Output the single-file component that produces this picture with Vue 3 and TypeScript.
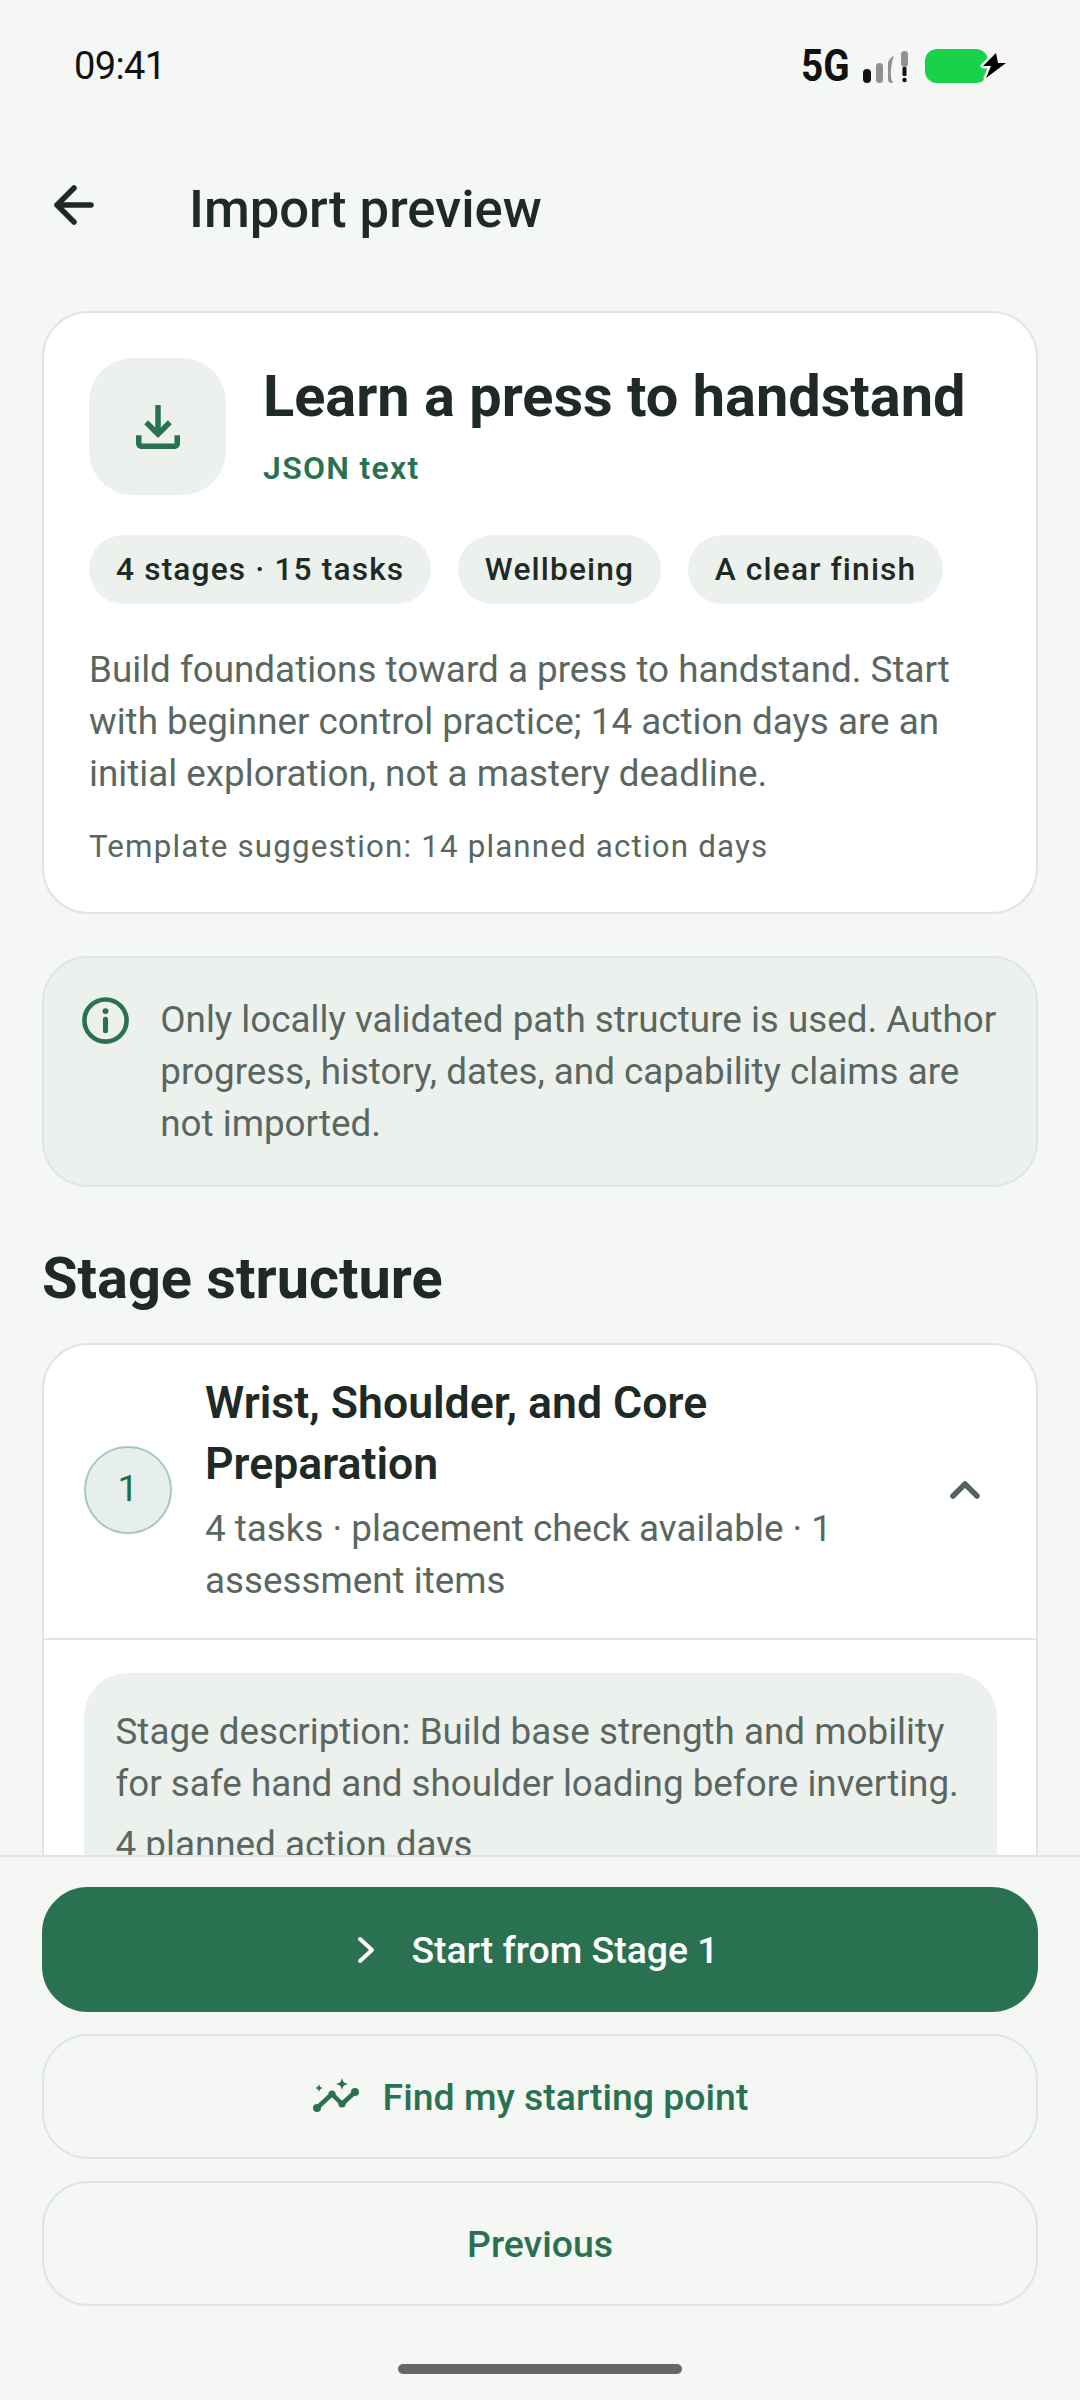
<script setup lang="ts">
const chips: string[] = ["4 stages · 15 tasks", "Wellbeing", "A clear finish"];
const boltPath = "M71 5 58 18h8l-5 12 20-15h-8l-2-10z";
</script>

<template>
  <div class="screen">
    <!-- status bar -->
    <div class="status">
      <span class="time">09:41</span>
      <div class="status-right">
        <span class="net">5G</span>
        <svg class="signal" width="46" height="34" viewBox="0 0 46 34">
          <rect x="0" y="20" width="8" height="14" rx="4" fill="#111" />
          <rect x="13" y="14" width="7" height="20" rx="3.5" fill="#8f918f" />
          <path d="M31 7c-3 1-6 4-6 8v15c0 2 1 4 3 4h2c-3-4-3-17 1-27z" fill="#8f918f" />
          <rect x="38" y="2" width="7" height="16" rx="3.5" fill="#8f918f" />
          <rect x="39.500" y="18" width="4" height="9" rx="1" fill="#111" />
          <circle cx="41.500" cy="31" r="2.200" fill="#111" />
        </svg>
        <svg class="battery" width="82" height="36" viewBox="0 0 82 36">
          <rect x="0" y="1" width="63" height="34" rx="12" fill="#1ad14c" />
          <path :d="boltPath" fill="#000" stroke="#f5f7f4" stroke-width="5" paint-order="stroke" stroke-linejoin="round" />
        </svg>
      </div>
    </div>

    <!-- app bar -->
    <header class="appbar">
      <svg class="back" width="66" height="66" viewBox="0 0 66 66" fill="none" stroke="#202a25" stroke-width="5.500" stroke-linecap="round" stroke-linejoin="round">
        <path d="M50 33H16M33 16 16 33l17 17" />
      </svg>
      <h1 class="page-title">Import preview</h1>
    </header>

    <main class="scroll">
      <section class="card summary">
        <div class="summary-head">
          <div class="summary-icon">
            <svg width="66" height="66" viewBox="0 0 24 24" fill="#2a7152">
              <path d="M18 15v3H6v-3H4v3c0 1.100.9 2 2 2h12c1.100 0 2-.9 2-2v-3h-2zM17 11l-1.410-1.410L13 12.170V4h-2v8.170L8.410 9.590 7 11l5 5 5-5z" />
            </svg>
          </div>
          <div class="summary-text">
            <h2 class="summary-title">Learn a press to handstand</h2>
            <div class="summary-source">JSON text</div>
          </div>
        </div>
        <div class="chips">
          <span v-for="chip in chips" :key="chip" class="chip">{{ chip }}</span>
        </div>
        <p class="body">Build foundations toward a press to handstand. Start with beginner control practice; 14 action days are an initial exploration, not a mastery deadline.</p>
        <p class="hint">Template suggestion: 14 planned action days</p>
      </section>

      <section class="notice">
        <svg class="notice-icon" width="55" height="55" viewBox="0 0 24 24" fill="none" stroke="#2a7152" stroke-width="2" stroke-linecap="round">
          <circle cx="12" cy="12" r="9.200" />
          <path d="M12 11.500v5" stroke-width="2.200" />
          <circle cx="12" cy="7.900" r="1.300" fill="#2a7152" stroke="none" />
        </svg>
        <p class="body">Only locally validated path structure is used. Author progress, history, dates, and capability claims are not imported.</p>
      </section>

      <h2 class="section-title">Stage structure</h2>

      <section class="card stage">
        <div class="stage-head">
          <div class="stage-badge">1</div>
          <div class="stage-text">
            <h3 class="stage-title">Wrist, Shoulder, and Core Preparation</h3>
            <p class="body stage-sub">4 tasks · placement check available · 1 assessment items</p>
          </div>
          <svg class="chevron" width="36" height="24" viewBox="0 0 36 24" fill="none" stroke="#56635c" stroke-width="5.500" stroke-linecap="round" stroke-linejoin="round">
            <path d="M6 18 18 6l12 12" />
          </svg>
        </div>
        <div class="stage-body">
          <div class="stage-desc">
            <p class="body">Stage description: Build base strength and mobility for safe hand and shoulder loading before inverting.</p>
            <p class="body planned">4 planned action days</p>
          </div>
        </div>
      </section>
    </main>

    <footer class="actions">
      <button class="btn primary">
        <svg width="24" height="30" viewBox="0 0 24 30" fill="none" stroke="#fff" stroke-width="4" stroke-linecap="round" stroke-linejoin="round">
          <path d="M6 4l12 11L6 26" />
        </svg>
        <span>Start from Stage 1</span>
      </button>
      <button class="btn secondary">
        <svg width="48" height="40" viewBox="0 0 48 40" fill="none">
          <path d="M5 31 20 17l10 10 13-12" stroke="#2a7152" stroke-width="4.500" stroke-linejoin="round" stroke-linecap="round" />
          <circle cx="5" cy="31" r="4" fill="#2a7152" />
          <circle cx="20" cy="17" r="3.600" fill="#2a7152" />
          <circle cx="30" cy="27" r="3.600" fill="#2a7152" />
          <circle cx="43" cy="15" r="4" fill="#2a7152" />
          <path d="M30 1c1 4 2 5 6 6-4 1-5 2-6 6-1-4-2-5-6-6 4-1 5-2 6-6zM7 7c.6 2.600 1.400 3.400 4 4-2.600.6-3.400 1.400-4 4-.6-2.600-1.400-3.400-4-4 2.600-.6 3.400-1.400 4-4z" fill="#2a7152" />
        </svg>
        <span>Find my starting point</span>
      </button>
      <button class="btn"><span>Previous</span></button>
      <div class="home-bar"></div>
    </footer>
  </div>
</template>

<style scoped>
.screen {
  width: 1080px;
  height: 2400px;
  display: flex;
  flex-direction: column;
  overflow: hidden;
  background: #f5f7f4;
  color: #202a25;
  font-family: Roboto, "Noto Sans", sans-serif;
}

.status {
  flex: none;
  height: 130px;
  padding: 44px 73px 0 74px;
  box-sizing: border-box;
  display: flex;
  justify-content: space-between;
  align-items: flex-start;
  color: #111;
}

.time {
  font-size: 38px;
  line-height: 44px;
  letter-spacing: -0.6px;
}

.status-right {
  display: flex;
  align-items: center;
  height: 48px;
  margin-top: -2px;
}

.net {
  font-size: 44px;
  font-weight: 700;
  line-height: 48px;
  width: 62px;
  transform: scaleX(0.88);
  transform-origin: left center;
}

.signal {
  margin-right: 16px;
}

.appbar {
  flex: none;
  height: 98px;
  margin-top: 46px;
  display: flex;
  align-items: flex-start;
  padding-left: 41px;
  box-sizing: border-box;
}

.back {
  margin-top: -4px;
}

.page-title {
  margin: 0 0 0 82px;
  font-size: 52.600px;
  font-weight: 500;
  line-height: 66px;
  color: #202a25;
}

.scroll {
  flex: 1;
  min-height: 0;
  overflow: hidden;
  padding: 37px 42px 0;
}

.card {
  background: #fff;
  border: 2.750px solid #dfe6e2;
  border-radius: 46px;
}

.summary {
  padding: 45px 45px 43px;
}

.summary-head {
  display: flex;
  gap: 37px;
}

.summary-icon {
  flex: none;
  width: 137px;
  height: 137px;
  border-radius: 44px;
  background: #edf1ee;
  display: flex;
  align-items: center;
  justify-content: center;
}

.summary-text {
  padding-top: 5px;
}

.summary-title {
  margin: 0;
  font-size: 57.700px;
  font-weight: 700;
  line-height: 66px;
  white-space: nowrap;
}

.summary-source {
  margin-top: 17px;
  font-size: 32px;
  font-weight: 600;
  line-height: 44px;
  letter-spacing: 1.300px;
  color: #2a7152;
}

.chips {
  display: flex;
  gap: 26.500px;
  margin-top: 40px;
}

.chip {
  height: 69px;
  padding: 0 27px;
  border-radius: 35px;
  background: #edf1ee;
  font-size: 31.700px;
  font-weight: 500;
  line-height: 69px;
  letter-spacing: 1.150px;
}

.body {
  margin: 0;
  font-size: 36.800px;
  line-height: 52.250px;
  color: #5a6760;
}

.summary .body {
  margin-top: 39.500px;
}

.hint {
  margin: 25px 0 0;
  font-size: 31.300px;
  line-height: 44px;
  letter-spacing: 1.170px;
  color: #5a6760;
}

.notice {
  margin-top: 42px;
  padding: 35.500px 33px 34.500px 33.750px;
  display: flex;
  gap: 27.500px;
  background: #edf1ee;
  border: 2.750px solid #dfe6e2;
  border-radius: 46px;
}

.notice-icon {
  flex: none;
  margin-top: -1px;
}

.section-title {
  margin: 58px 0 0;
  font-size: 57.700px;
  font-weight: 700;
  line-height: 66px;
}

.stage {
  margin-top: 32px;
}

.stage-head {
  display: flex;
  align-items: center;
  padding: 28px 38px 30px 40px;
  border-bottom: 2.750px solid #dfe6e2;
}

.stage-badge {
  flex: none;
  width: 88px;
  height: 88px;
  box-sizing: border-box;
  border: 2.750px solid #a9c8bb;
  border-radius: 50%;
  background: #e6efeb;
  color: #1f6b4c;
  font-size: 37px;
  font-weight: 400;
  line-height: 82px;
  text-align: center;
}

.stage-text {
  flex: 1;
  margin-left: 33px;
}

.stage-title {
  margin: 0;
  font-size: 44.600px;
  font-weight: 600;
  line-height: 61px;
}

.stage-sub {
  margin-top: 8px;
}

.chevron {
  flex: none;
  margin: 0 15px 0 60px;
}

.stage-body {
  padding: 33px 39.500px 0;
}

.stage-desc {
  padding: 33px 32px;
  background: #edf1ee;
  border-radius: 44px;
}

.planned {
  margin-top: 9px;
}

.actions {
  flex: none;
  height: 545px;
  box-sizing: border-box;
  padding: 30px 42px 0;
  border-top: 2.750px solid #dfe6e2;
  background: #f5f7f4;
  display: flex;
  flex-direction: column;
  gap: 22px;
  position: relative;
}

.btn {
  height: 125px;
  flex: none;
  display: flex;
  align-items: center;
  justify-content: center;
  gap: 23px;
  background: transparent;
  border: 2.750px solid #dfe6e2;
  border-radius: 46px;
  font-family: inherit;
  font-size: 37.400px;
  font-weight: 500;
  color: #2a7152;
}

.btn.primary {
  background: #2a7152;
  border-color: #2a7152;
  color: #fff;
  gap: 33px;
  padding-right: 13px;
}

.btn.secondary {
  padding-right: 26px;
}

.home-bar {
  position: absolute;
  left: 398px;
  bottom: 26px;
  width: 284px;
  height: 10px;
  border-radius: 5px;
  background: #666;
}
</style>

<style>
html,
body {
  margin: 0;
  background: #f5f7f4;
}
</style>
